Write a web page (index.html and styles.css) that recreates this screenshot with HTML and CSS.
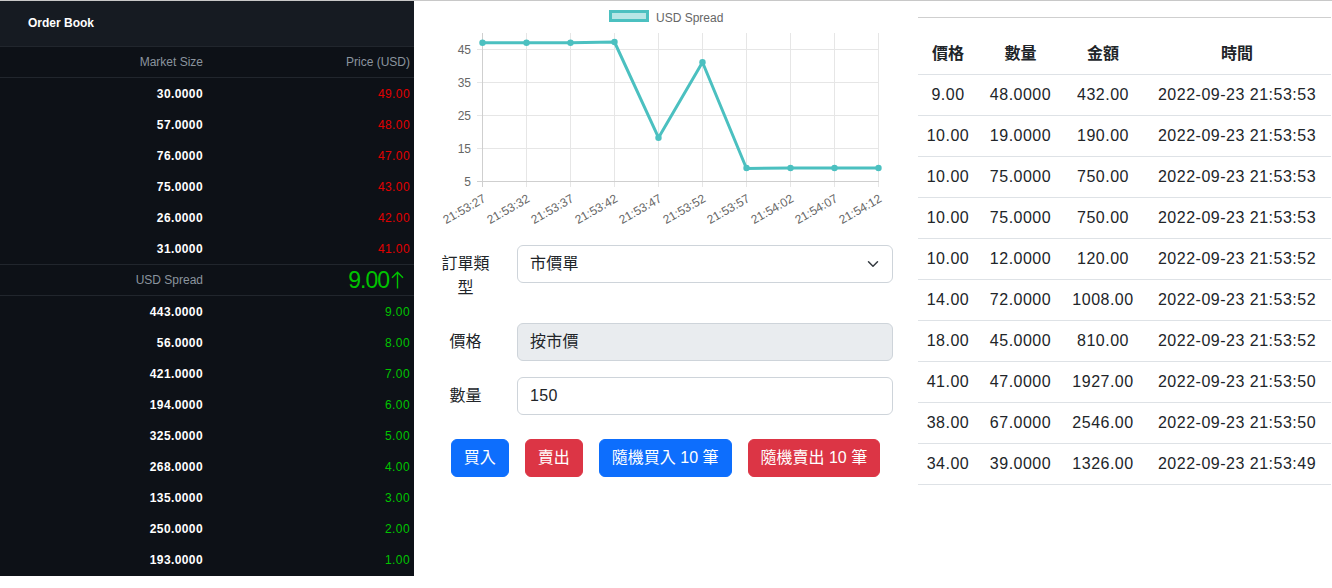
FILE: index.html
```html
<!DOCTYPE html>
<html lang="zh-Hant">
<head>
<meta charset="utf-8">
<title>Order Book</title>
<link rel="stylesheet" href="styles.css">
</head>
<body>
<div class="page">
  <aside class="book">
    <div class="book-title">Order Book</div>
    <div class="book-row book-head"><span>Market Size</span><span>Price (USD)</span></div>
    <div class="book-list">
      <div class="book-row"><span class="size">30.0000</span><span class="ask">49.00</span></div>
      <div class="book-row"><span class="size">57.0000</span><span class="ask">48.00</span></div>
      <div class="book-row"><span class="size">76.0000</span><span class="ask">47.00</span></div>
      <div class="book-row"><span class="size">75.0000</span><span class="ask">43.00</span></div>
      <div class="book-row"><span class="size">26.0000</span><span class="ask">42.00</span></div>
      <div class="book-row"><span class="size">31.0000</span><span class="ask">41.00</span></div>
    </div>
    <div class="book-row spread"><span class="spread-label">USD Spread</span><span class="spread-value">9.00<svg class="up-arrow" width="13" height="18" viewBox="0 0 13 18" xmlns="http://www.w3.org/2000/svg"><path d="M6.5 17.5V1.2M1 6.8 6.5 1.2 12 6.8" fill="none" stroke="#00c400" stroke-width="1.4"/></svg></span></div>
    <div class="book-list">
      <div class="book-row"><span class="size">443.0000</span><span class="bid">9.00</span></div>
      <div class="book-row"><span class="size">56.0000</span><span class="bid">8.00</span></div>
      <div class="book-row"><span class="size">421.0000</span><span class="bid">7.00</span></div>
      <div class="book-row"><span class="size">194.0000</span><span class="bid">6.00</span></div>
      <div class="book-row"><span class="size">325.0000</span><span class="bid">5.00</span></div>
      <div class="book-row"><span class="size">268.0000</span><span class="bid">4.00</span></div>
      <div class="book-row"><span class="size">135.0000</span><span class="bid">3.00</span></div>
      <div class="book-row"><span class="size">250.0000</span><span class="bid">2.00</span></div>
      <div class="book-row"><span class="size">193.0000</span><span class="bid">1.00</span></div>
    </div>
  </aside>

  <main class="center">
    <svg class="chart" width="455" height="228" viewBox="0 0 455 228" xmlns="http://www.w3.org/2000/svg">
      <rect x="172.5" y="10.5" width="37" height="9" fill="rgba(75,192,192,0.4)" stroke="rgb(75,192,192)" stroke-width="3"/>
      <text class="chart-text" x="218" y="20.5">USD Spread</text>
      <g stroke="#e6e6e6" stroke-width="1">
        <line x1="88.5" y1="32" x2="88.5" y2="186"/>
        <line x1="132.5" y1="32" x2="132.5" y2="186"/>
        <line x1="176.5" y1="32" x2="176.5" y2="186"/>
        <line x1="220.5" y1="32" x2="220.5" y2="186"/>
        <line x1="264.5" y1="32" x2="264.5" y2="186"/>
        <line x1="308.5" y1="32" x2="308.5" y2="186"/>
        <line x1="352.5" y1="32" x2="352.5" y2="186"/>
        <line x1="396.5" y1="32" x2="396.5" y2="186"/>
        <line x1="440.5" y1="32" x2="440.5" y2="186"/>
        <line x1="39" y1="48.5" x2="441" y2="48.5"/>
        <line x1="39" y1="81.5" x2="441" y2="81.5"/>
        <line x1="39" y1="114.5" x2="441" y2="114.5"/>
        <line x1="39" y1="147.5" x2="441" y2="147.5"/>
      </g>
      <g stroke="#cfcfcf" stroke-width="1">
        <line x1="44.5" y1="32" x2="44.5" y2="186"/>
        <line x1="39" y1="180.5" x2="441" y2="180.5"/>
      </g>
      <g class="chart-text" text-anchor="end">
        <text x="33" y="52.5">45</text>
        <text x="33" y="85.5">35</text>
        <text x="33" y="118.5">25</text>
        <text x="33" y="151.5">15</text>
        <text x="33" y="184.5">5</text>
        <text transform="translate(48.5 200) rotate(-30)">21:53:27</text>
        <text transform="translate(92.5 200) rotate(-30)">21:53:32</text>
        <text transform="translate(136.5 200) rotate(-30)">21:53:37</text>
        <text transform="translate(180.5 200) rotate(-30)">21:53:42</text>
        <text transform="translate(224.5 200) rotate(-30)">21:53:47</text>
        <text transform="translate(268.5 200) rotate(-30)">21:53:52</text>
        <text transform="translate(312.5 200) rotate(-30)">21:53:57</text>
        <text transform="translate(356.5 200) rotate(-30)">21:54:02</text>
        <text transform="translate(400.5 200) rotate(-30)">21:54:07</text>
        <text transform="translate(444.5 200) rotate(-30)">21:54:12</text>
      </g>
      <polyline fill="none" stroke="rgb(75,192,192)" stroke-width="3" stroke-linejoin="round" stroke-linecap="round"
        points="44.5,41.7 88.5,41.7 132.5,41.7 176.5,41 220.5,136.7 264.5,61.3 308.5,167.5 352.5,167 396.5,167 440.5,167"/>
      <g fill="rgb(75,192,192)">
        <circle cx="44.5" cy="41.7" r="3.2"/>
        <circle cx="88.5" cy="41.7" r="3.2"/>
        <circle cx="132.5" cy="41.7" r="3.2"/>
        <circle cx="176.5" cy="41" r="3.2"/>
        <circle cx="220.5" cy="136.7" r="3.2"/>
        <circle cx="264.5" cy="61.3" r="3.2"/>
        <circle cx="308.5" cy="167" r="3.2"/>
        <circle cx="352.5" cy="167" r="3.2"/>
        <circle cx="396.5" cy="167" r="3.2"/>
        <circle cx="440.5" cy="167" r="3.2"/>
      </g>
    </svg>

    <form class="order-form">
      <div class="form-row">
        <label class="form-label">訂單類型</label>
        <div class="form-control select-box">
          <span>市價單</span>
          <svg class="chevron" width="16" height="12" viewBox="0 0 16 16" xmlns="http://www.w3.org/2000/svg"><path d="m2 5 6 6 6-6" fill="none" stroke="#343a40" stroke-width="2" stroke-linecap="round" stroke-linejoin="round"/></svg>
        </div>
      </div>
      <div class="form-row">
        <label class="form-label">價格</label>
        <div class="form-control disabled">按市價</div>
      </div>
      <div class="form-row form-row-last">
        <label class="form-label">數量</label>
        <div class="form-control">150</div>
      </div>
      <div class="btn-row">
        <button type="button" class="btn btn-buy">買入</button>
        <button type="button" class="btn btn-sell">賣出</button>
        <button type="button" class="btn btn-buy">隨機買入 10 筆</button>
        <button type="button" class="btn btn-sell">隨機賣出 10 筆</button>
      </div>
    </form>
  </main>

  <section class="trades">
    <table class="trade-table">
      <thead>
        <tr><th class="c1">價格</th><th class="c2">數量</th><th class="c3">金額</th><th class="c4">時間</th></tr>
      </thead>
      <tbody>
        <tr><td>9.00</td><td>48.0000</td><td>432.00</td><td>2022-09-23 21:53:53</td></tr>
        <tr><td>10.00</td><td>19.0000</td><td>190.00</td><td>2022-09-23 21:53:53</td></tr>
        <tr><td>10.00</td><td>75.0000</td><td>750.00</td><td>2022-09-23 21:53:53</td></tr>
        <tr><td>10.00</td><td>75.0000</td><td>750.00</td><td>2022-09-23 21:53:53</td></tr>
        <tr><td>10.00</td><td>12.0000</td><td>120.00</td><td>2022-09-23 21:53:52</td></tr>
        <tr><td>14.00</td><td>72.0000</td><td>1008.00</td><td>2022-09-23 21:53:52</td></tr>
        <tr><td>18.00</td><td>45.0000</td><td>810.00</td><td>2022-09-23 21:53:52</td></tr>
        <tr><td>41.00</td><td>47.0000</td><td>1927.00</td><td>2022-09-23 21:53:50</td></tr>
        <tr><td>38.00</td><td>67.0000</td><td>2546.00</td><td>2022-09-23 21:53:50</td></tr>
        <tr><td>34.00</td><td>39.0000</td><td>1326.00</td><td>2022-09-23 21:53:49</td></tr>
      </tbody>
    </table>
  </section>
</div>
</body>
</html>
```

FILE: styles.css
```css
* { box-sizing: border-box; }

html, body {
  margin: 0;
  padding: 0;
  background: #ffffff;
}

body {
  border-top: 1px solid #c8c8c8;
  font-family: "Liberation Sans", "Noto Sans CJK TC", sans-serif;
  color: #212529;
}

.page {
  display: flex;
  align-items: flex-start;
}

/* ---------- Order book ---------- */
.book {
  width: 414px;
  flex: 0 0 414px;
  background: #0d1117;
  color: #ffffff;
  font-size: 12px;
  padding-bottom: 1px;
}

.book-title {
  height: 46px;
  line-height: 45px;
  padding-left: 28px;
  background: #161b22;
  border-bottom: 1px solid #21262d;
  font-weight: bold;
  font-size: 12px;
}

.book-row {
  display: grid;
  grid-template-columns: 207px 207px;
  height: 31px;
  padding-top: 2px;
  line-height: 29px;
}

.book-row > span {
  text-align: right;
  padding-right: 4px;
  letter-spacing: 0.4px;
}

.book-head {
  height: 31px;
  padding-top: 0;
  line-height: 30px;
  border-bottom: 1px solid #21262d;
  color: #8b949e;
}

.book-head > span { letter-spacing: 0; }

.size {
  font-weight: bold;
  color: #ffffff;
}

.ask { color: #e00000; }
.bid { color: #00c400; }

.spread {
  height: 32px;
  padding-top: 0;
  line-height: 30px;
  border-top: 1px solid #21262d;
  border-bottom: 1px solid #21262d;
}

.book-row > .spread-label {
  color: #8b949e;
  letter-spacing: 0;
}

.book-row > .spread-value {
  display: flex;
  justify-content: flex-end;
  align-items: center;
  color: #00c400;
  font-size: 23px;
  letter-spacing: -1px;
  padding-right: 10px;
}

.up-arrow {
  display: block;
  margin-left: 2px;
  margin-top: -1px;
}

/* ---------- Center column ---------- */
.center {
  width: 455px;
  flex: 0 0 455px;
  margin-left: 24px;
}

.chart {
  display: block;
}

.chart-text {
  font-family: "Liberation Sans", sans-serif;
  font-size: 12px;
  fill: #666666;
}

.order-form {
  margin-top: 16px;
  font-size: 16px;
}

.form-row {
  display: flex;
  align-items: flex-start;
  margin-bottom: 16px;
}

.form-row-last { margin-bottom: 24px; }

.form-label {
  width: 55px;
  flex: 0 0 55px;
  padding: 7px 0;
  line-height: 24px;
  text-align: center;
  color: #212529;
}

.form-control {
  flex: 1;
  margin-left: 24px;
  height: 38px;
  padding: 6px 12px;
  line-height: 24px;
  border: 1px solid #ced4da;
  border-radius: 6px;
  background: #ffffff;
  color: #212529;
  letter-spacing: 0.3px;
}

.form-control.disabled {
  background: #e9ecef;
}

.select-box {
  display: flex;
  align-items: center;
  justify-content: space-between;
}

.chevron {
  display: block;
  margin-right: -1px;
}

.btn-row {
  display: flex;
  justify-content: center;
  gap: 16px;
}

.btn {
  height: 38px;
  padding: 6px 12px;
  border: 1px solid transparent;
  border-radius: 6px;
  font-family: "Liberation Sans", "Noto Sans CJK TC", sans-serif;
  font-size: 16px;
  line-height: 24px;
  color: #ffffff;
  cursor: pointer;
}

.btn-buy { background: #0d6efd; border-color: #0d6efd; }
.btn-sell { background: #dc3545; border-color: #dc3545; }

/* ---------- Trades table ---------- */
.trades {
  width: 413px;
  flex: 0 0 413px;
  margin-left: 25px;
  margin-top: 16px;
  border-top: 1px solid #cfcfcf;
  padding-top: 16px;
}

.trade-table {
  width: 100%;
  border-collapse: collapse;
  table-layout: fixed;
  font-size: 16px;
  color: #212529;
}

.trade-table th,
.trade-table td {
  padding: 8px 0;
  line-height: 24px;
  text-align: center;
  border-bottom: 1px solid #dee2e6;
  white-space: nowrap;
}

.trade-table th { font-weight: bold; }

.trade-table td { letter-spacing: 0.5px; }

.c1 { width: 60px; }
.c2 { width: 85px; }
.c3 { width: 80px; }
.c4 { width: 188px; }
```
